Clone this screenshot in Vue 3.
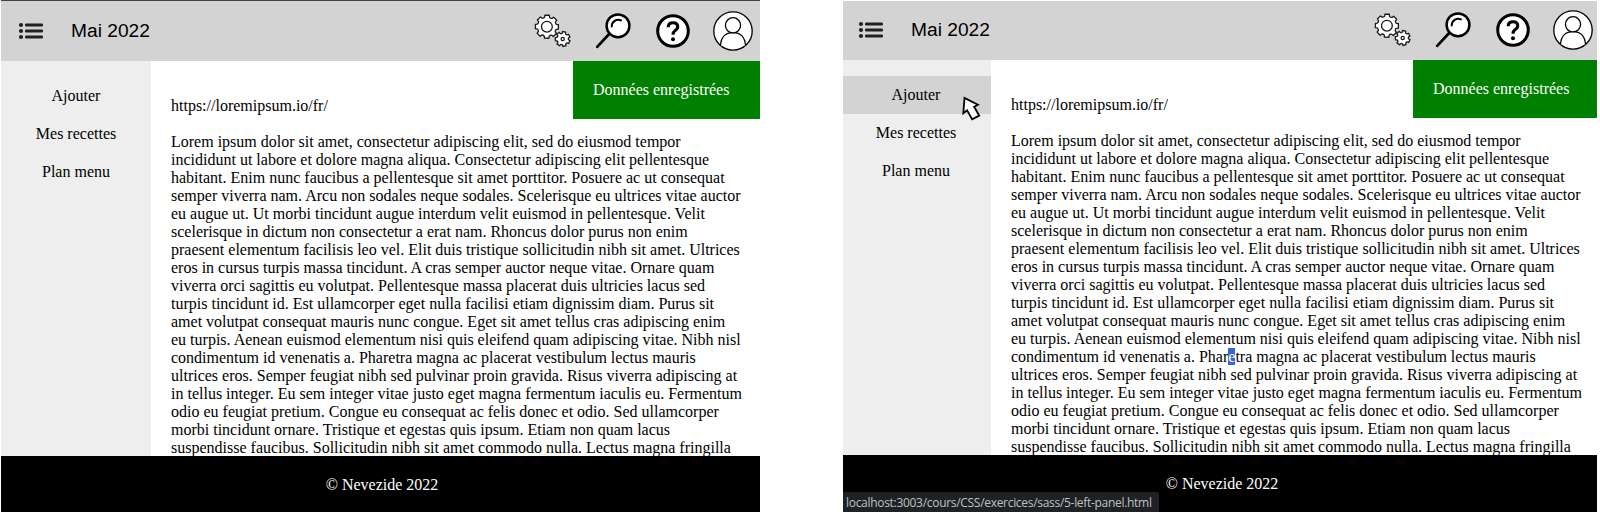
<script setup>
const lines = [
  'Lorem ipsum dolor sit amet, consectetur adipiscing elit, sed do eiusmod tempor',
  'incididunt ut labore et dolore magna aliqua. Consectetur adipiscing elit pellentesque',
  'habitant. Enim nunc faucibus a pellentesque sit amet porttitor. Posuere ac ut consequat',
  'semper viverra nam. Arcu non sodales neque sodales. Scelerisque eu ultrices vitae auctor',
  'eu augue ut. Ut morbi tincidunt augue interdum velit euismod in pellentesque. Velit',
  'scelerisque in dictum non consectetur a erat nam. Rhoncus dolor purus non enim',
  'praesent elementum facilisis leo vel. Elit duis tristique sollicitudin nibh sit amet. Ultrices',
  'eros in cursus turpis massa tincidunt. A cras semper auctor neque vitae. Ornare quam',
  'viverra orci sagittis eu volutpat. Pellentesque massa placerat duis ultricies lacus sed',
  'turpis tincidunt id. Est ullamcorper eget nulla facilisi etiam dignissim diam. Purus sit',
  'amet volutpat consequat mauris nunc congue. Eget sit amet tellus cras adipiscing enim',
  'eu turpis. Aenean euismod elementum nisi quis eleifend quam adipiscing vitae. Nibh nisl',
  'condimentum id venenatis a. Pharetra magna ac placerat vestibulum lectus mauris',
  'ultrices eros. Semper feugiat nibh sed pulvinar proin gravida. Risus viverra adipiscing at',
  'in tellus integer. Eu sem integer vitae justo eget magna fermentum iaculis eu. Fermentum',
  'odio eu feugiat pretium. Congue eu consequat ac felis donec et odio. Sed ullamcorper',
  'morbi tincidunt ornare. Tristique et egestas quis ipsum. Etiam non quam lacus',
  'suspendisse faucibus. Sollicitudin nibh sit amet commodo nulla. Lectus magna fringilla',
]
const markedLine = 12
const markedAt = lines[markedLine].indexOf('Pharetra') + 4

const menu = ['Ajouter', 'Mes recettes', 'Plan menu']
const pages = [
  { name: 'idle', hovered: false },
  { name: 'hover', hovered: true },
]

function gear(cx, cy, outer, inner, teeth, turn) {
  const step = (Math.PI * 2) / teeth
  const at = (r, a) => `${(cx + r * Math.cos(a)).toFixed(2)} ${(cy + r * Math.sin(a)).toFixed(2)}`
  let d = ''
  for (let i = 0; i < teeth; i++) {
    const a = turn + i * step
    d += `${i ? 'Q' + at(inner - 0.9, a - step * 0.5) + ' ' : 'M'}${at(inner, a - step * 0.32)}`
    d += `L${at(outer, a - step * 0.24)}L${at(outer, a + step * 0.24)}L${at(inner, a + step * 0.32)}`
  }
  return d + `Q${at(inner - 0.9, turn - step * 0.5)} ${at(inner, turn - step * 0.32)}Z`
}
const bigGear = gear(13.9, 15.7, 11.7, 9.8, 8, -Math.PI / 2 + 0.02)
const smallGear = gear(29.7, 28, 7.5, 6, 7, -Math.PI / 2 + 0.2)
</script>

<template>
  <div class="board">
    <div v-for="p in pages" :key="p.name" class="frame" :class="p.name">
      <div class="page">
        <header class="top">
          <svg class="burger" width="26" height="20" viewBox="0 0 26 20">
            <g fill="#231f20">
              <circle cx="3" cy="4" r="2.1" /><circle cx="3" cy="10" r="2.1" /><circle cx="3" cy="16" r="2.1" />
              <rect x="7" y="2.5" width="18" height="3" rx="1.3" />
              <rect x="7" y="8.5" width="18" height="3" rx="1.3" />
              <rect x="7" y="14.5" width="18" height="3" rx="1.3" />
            </g>
          </svg>
          <span class="month">Mai 2022</span>
          <nav class="tools">
            <svg width="40" height="40" viewBox="0 0 40 40" fill="#fff" stroke="#1a1a1a" stroke-width="1.3" stroke-linejoin="round">
              <path :d="bigGear" /><circle cx="13.9" cy="15.7" r="5.4" />
              <path :d="smallGear" /><circle cx="29.7" cy="28" r="1.6" />
            </svg>
            <svg width="40" height="40" viewBox="0 0 40 40">
              <path d="M15.7 23.5L4.2 35.8" stroke="#000" stroke-width="2.7" stroke-linecap="round" />
              <circle cx="25" cy="14.8" r="11.4" fill="#fff" stroke="#000" stroke-width="2.5" />
              <path d="M18.7 15.5A6.6 6.6 0 0 1 28 9.4" fill="none" stroke="#000" stroke-width="2" stroke-linecap="round" />
            </svg>
            <svg width="40" height="40" viewBox="0 0 40 40">
              <circle cx="20" cy="20" r="15.3" fill="#fff" stroke="#000" stroke-width="3" />
              <path d="M15.2 16.2Q15.3 11.8 20 11.8Q24.7 11.8 24.7 15.8Q24.7 18 22.2 19.5Q20 21 20 23.8" fill="none" stroke="#000" stroke-width="3.1" />
              <circle cx="20" cy="28.2" r="2" />
            </svg>
            <svg width="40" height="40" viewBox="0 0 40 40" fill="#fff" stroke="#000" stroke-width="1.3">
              <circle cx="20" cy="20" r="19.2" />
              <path d="M7.5 34.5C8 26 13 21.5 20 21.5S32 26 32.5 34.5" />
              <circle cx="20" cy="14.3" r="7.6" />
            </svg>
          </nav>
        </header>
        <div class="middle">
          <aside class="side">
            <div v-for="(m, i) in menu" :key="m" class="item" :class="{ active: p.hovered && i === 0 }">{{ m }}</div>
          </aside>
          <main class="content">
            <div class="line">https://loremipsum.io/fr/</div>
            <div class="line">&nbsp;</div>
            <div v-for="(l, i) in lines" :key="i" class="line">
              <template v-if="p.hovered && i === markedLine">{{ l.slice(0, markedAt) }}<span class="marked">{{ l[markedAt] }}</span>{{ l.slice(markedAt + 1) }}</template>
              <template v-else>{{ l }}</template>
            </div>
          </main>
          <div class="toast">Données enregistrées</div>
        </div>
        <footer class="bottom">© Nevezide 2022</footer>
      </div>
      <template v-if="p.hovered">
        <svg class="pointer" width="20" height="26" viewBox="0 0 20 26">
          <path d="M2.5 2L1.3 17.2L5.1 14.3L10.2 23.4L17.2 19.6L12.1 10.8L15.9 8.8Z" fill="#fff" stroke="#000" stroke-width="1.8" />
        </svg>
        <div class="status">localhost:3003/cours/CSS/exercices/sass/5-left-panel.html</div>
      </template>
    </div>
  </div>
</template>

<style>
body { margin: 0; background: #fff; }
</style>

<style scoped>
.board {
  display: flex;
  width: 1600px;
  height: 512px;
  overflow: hidden;
  box-sizing: border-box;
  padding-left: 1px;
  gap: 83px;
  font: 16px/18px "Liberation Serif", "Times New Roman", serif;
  color: #000;
}
.frame {
  position: relative;
  flex: none;
  box-sizing: border-box;
  height: 512px;
  overflow: hidden;
}
.idle { width: 759px; border-top: 1px solid #424044; }
.hover { width: 754px; }
.hover .page { margin-left: -2px; }
.hover .top { box-shadow: inset 0 1px #fff; }
.page { display: flex; flex-direction: column; width: 762px; height: 512px; }
.top {
  display: flex;
  flex: none;
  align-items: center;
  height: 60px;
  background: #d3d3d3;
}
.burger { margin-left: 17px; }
.month {
  margin-left: 27px;
  width: 462px;
  font: 19.2px/22px "Liberation Sans", Arial, sans-serif;
}
.tools { display: flex; gap: 20px; }
.middle { position: relative; display: flex; flex: none; height: 395px; overflow: hidden; }
.side {
  flex: none;
  box-sizing: border-box;
  width: 150px;
  padding-top: 16px;
  background: #eee;
  text-align: center;
}
.item { padding: 10px; }
.active { background: #d3d3d3; }
.content { padding: 36px 0 0 20px; }
.line { height: 18px; white-space: pre; }
.marked { background: #3367d1; color: #fff; }
.toast {
  position: absolute;
  top: 0;
  left: 572px;
  width: 200px;
  box-sizing: border-box;
  padding: 20px;
  background: green;
  color: #fff;
}
.bottom {
  flex: 1;
  box-sizing: border-box;
  padding-top: 20px;
  background: #000;
  color: #fff;
  text-align: center;
}
.pointer { position: absolute; left: 119px; top: 96px; }
.status {
  position: absolute;
  left: 0;
  bottom: 0;
  width: 316px;
  height: 20px;
  box-sizing: border-box;
  padding-left: 3px;
  border-top-right-radius: 3px;
  background: #202124;
  color: #bdc1c6;
  font: 12px/21px "Open Sans", "Noto Sans", sans-serif;
  letter-spacing: -0.3px;
  white-space: nowrap;
}
</style>
